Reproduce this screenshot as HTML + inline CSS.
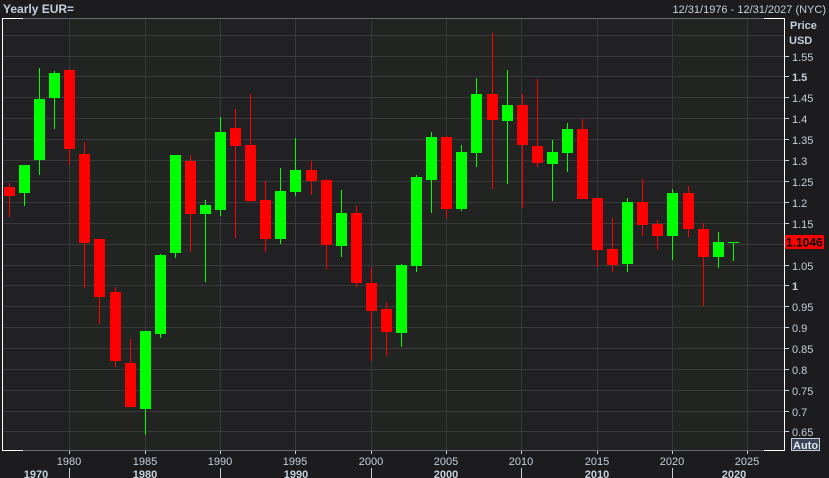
<!DOCTYPE html>
<html><head><meta charset="utf-8"><style>
html,body{margin:0;padding:0;background:#1c1c1e;width:829px;height:478px;overflow:hidden;font-family:"Liberation Sans",sans-serif}
svg{display:block}
text{font-family:"Liberation Sans",sans-serif;fill:#c6cfd8;font-size:11px}
</style></head><body>
<svg width="829" height="478" viewBox="0 0 829 478">
<rect x="0" y="0" width="829" height="478" fill="#1c1c1e"/>
<rect x="2" y="18" width="782" height="432" fill="#212123"/>
<rect x="69" y="18" width="151" height="432" fill="#222422"/>
<rect x="371" y="18" width="150" height="432" fill="#222422"/>
<rect x="672" y="18" width="75" height="432" fill="#222422"/>
<g stroke="#38393b" stroke-width="1">
<line x1="2" x2="784" y1="35.5" y2="35.5"/><line x1="2" x2="784" y1="56.5" y2="56.5"/><line x1="2" x2="784" y1="76.5" y2="76.5"/><line x1="2" x2="784" y1="97.5" y2="97.5"/><line x1="2" x2="784" y1="118.5" y2="118.5"/><line x1="2" x2="784" y1="139.5" y2="139.5"/><line x1="2" x2="784" y1="160.5" y2="160.5"/><line x1="2" x2="784" y1="181.5" y2="181.5"/><line x1="2" x2="784" y1="202.5" y2="202.5"/><line x1="2" x2="784" y1="223.5" y2="223.5"/><line x1="2" x2="784" y1="244.5" y2="244.5"/><line x1="2" x2="784" y1="265.5" y2="265.5"/><line x1="2" x2="784" y1="285.5" y2="285.5"/><line x1="2" x2="784" y1="306.5" y2="306.5"/><line x1="2" x2="784" y1="327.5" y2="327.5"/><line x1="2" x2="784" y1="348.5" y2="348.5"/><line x1="2" x2="784" y1="369.5" y2="369.5"/><line x1="2" x2="784" y1="390.5" y2="390.5"/><line x1="2" x2="784" y1="411.5" y2="411.5"/><line x1="2" x2="784" y1="431.5" y2="431.5"/>
<line x1="69.5" x2="69.5" y1="18" y2="450"/><line x1="145.5" x2="145.5" y1="18" y2="450"/><line x1="220.5" x2="220.5" y1="18" y2="450"/><line x1="295.5" x2="295.5" y1="18" y2="450"/><line x1="371.5" x2="371.5" y1="18" y2="450"/><line x1="446.5" x2="446.5" y1="18" y2="450"/><line x1="521.5" x2="521.5" y1="18" y2="450"/><line x1="597.5" x2="597.5" y1="18" y2="450"/><line x1="672.5" x2="672.5" y1="18" y2="450"/><line x1="747.5" x2="747.5" y1="18" y2="450"/>
</g>
<g stroke="#6a6b6d"><line x1="2" x2="784" y1="18.5" y2="18.5"/><line x1="2" x2="784" y1="450.5" y2="450.5"/></g>
<g stroke="#ffffff" stroke-width="1">
<line x1="2.5" x2="2.5" y1="18" y2="451"/><line x1="2" x2="23" y1="18.5" y2="18.5"/><line x1="2" x2="23" y1="450.5" y2="450.5"/>
<line x1="764" x2="784" y1="18.5" y2="18.5"/><line x1="764" x2="784" y1="450.5" y2="450.5"/><line x1="784.5" x2="784.5" y1="18" y2="451"/>
</g>
<g fill="#ff0000" stroke="#ff0000">
<line x1="9.5" x2="9.5" y1="183" y2="217"/><rect x="4" y="187" width="11" height="9" stroke="none"/>
<line x1="69.5" x2="69.5" y1="69" y2="165"/><rect x="64" y="70" width="11" height="79" stroke="none"/>
<line x1="84.5" x2="84.5" y1="142" y2="288"/><rect x="79" y="154" width="11" height="89" stroke="none"/>
<line x1="99.5" x2="99.5" y1="239" y2="324"/><rect x="94" y="239" width="11" height="58" stroke="none"/>
<line x1="115.5" x2="115.5" y1="287" y2="367"/><rect x="110" y="292" width="11" height="69" stroke="none"/>
<line x1="130.5" x2="130.5" y1="339" y2="407"/><rect x="125" y="363" width="11" height="44" stroke="none"/>
<line x1="190.5" x2="190.5" y1="155" y2="252"/><rect x="185" y="161" width="11" height="53" stroke="none"/>
<line x1="235.5" x2="235.5" y1="109" y2="238"/><rect x="230" y="128" width="11" height="18" stroke="none"/>
<line x1="250.5" x2="250.5" y1="94" y2="202"/><rect x="245" y="145" width="11" height="56" stroke="none"/>
<line x1="265.5" x2="265.5" y1="181" y2="252"/><rect x="260" y="200" width="11" height="39" stroke="none"/>
<line x1="311.5" x2="311.5" y1="161" y2="195"/><rect x="306" y="170" width="11" height="11" stroke="none"/>
<line x1="326.5" x2="326.5" y1="179" y2="269"/><rect x="321" y="180" width="11" height="65" stroke="none"/>
<line x1="356.5" x2="356.5" y1="206" y2="287"/><rect x="351" y="213" width="11" height="70" stroke="none"/>
<line x1="371.5" x2="371.5" y1="267" y2="361"/><rect x="366" y="283" width="11" height="28" stroke="none"/>
<line x1="386.5" x2="386.5" y1="302" y2="356"/><rect x="381" y="309" width="11" height="23" stroke="none"/>
<line x1="446.5" x2="446.5" y1="136" y2="218"/><rect x="441" y="137" width="11" height="72" stroke="none"/>
<line x1="492.5" x2="492.5" y1="33" y2="189"/><rect x="487" y="94" width="11" height="26" stroke="none"/>
<line x1="522.5" x2="522.5" y1="94" y2="208"/><rect x="517" y="105" width="11" height="40" stroke="none"/>
<line x1="537.5" x2="537.5" y1="79" y2="167"/><rect x="532" y="146" width="11" height="17" stroke="none"/>
<line x1="582.5" x2="582.5" y1="119" y2="199"/><rect x="577" y="129" width="11" height="70" stroke="none"/>
<line x1="597.5" x2="597.5" y1="198" y2="267"/><rect x="592" y="198" width="11" height="52" stroke="none"/>
<line x1="612.5" x2="612.5" y1="218" y2="272"/><rect x="607" y="249" width="11" height="16" stroke="none"/>
<line x1="642.5" x2="642.5" y1="179" y2="236"/><rect x="637" y="202" width="11" height="23" stroke="none"/>
<line x1="657.5" x2="657.5" y1="220" y2="250"/><rect x="652" y="224" width="11" height="12" stroke="none"/>
<line x1="688.5" x2="688.5" y1="186" y2="237"/><rect x="683" y="193" width="11" height="36" stroke="none"/>
<line x1="703.5" x2="703.5" y1="223" y2="306"/><rect x="698" y="229" width="11" height="28" stroke="none"/>
</g>
<g fill="#00ff00" stroke="#00ff00">
<line x1="24.5" x2="24.5" y1="165" y2="206"/><rect x="19" y="165" width="11" height="28" stroke="none"/>
<line x1="39.5" x2="39.5" y1="68" y2="175"/><rect x="34" y="99" width="11" height="61" stroke="none"/>
<line x1="54.5" x2="54.5" y1="71" y2="129"/><rect x="49" y="73" width="11" height="25" stroke="none"/>
<line x1="145.5" x2="145.5" y1="331" y2="435"/><rect x="140" y="331" width="11" height="78" stroke="none"/>
<line x1="160.5" x2="160.5" y1="254" y2="338"/><rect x="155" y="255" width="11" height="79" stroke="none"/>
<line x1="175.5" x2="175.5" y1="155" y2="258"/><rect x="170" y="155" width="11" height="98" stroke="none"/>
<line x1="205.5" x2="205.5" y1="200" y2="282"/><rect x="200" y="205" width="11" height="9" stroke="none"/>
<line x1="220.5" x2="220.5" y1="117" y2="216"/><rect x="215" y="132" width="11" height="78" stroke="none"/>
<line x1="280.5" x2="280.5" y1="168" y2="244"/><rect x="275" y="191" width="11" height="48" stroke="none"/>
<line x1="295.5" x2="295.5" y1="138" y2="196"/><rect x="290" y="170" width="11" height="22" stroke="none"/>
<line x1="341.5" x2="341.5" y1="190" y2="257"/><rect x="336" y="213" width="11" height="33" stroke="none"/>
<line x1="401.5" x2="401.5" y1="264" y2="347"/><rect x="396" y="265" width="11" height="68" stroke="none"/>
<line x1="416.5" x2="416.5" y1="175" y2="272"/><rect x="411" y="177" width="11" height="89" stroke="none"/>
<line x1="431.5" x2="431.5" y1="132" y2="213"/><rect x="426" y="137" width="11" height="43" stroke="none"/>
<line x1="461.5" x2="461.5" y1="145" y2="211"/><rect x="456" y="152" width="11" height="57" stroke="none"/>
<line x1="476.5" x2="476.5" y1="78" y2="167"/><rect x="471" y="94" width="11" height="59" stroke="none"/>
<line x1="507.5" x2="507.5" y1="70" y2="184"/><rect x="502" y="105" width="11" height="16" stroke="none"/>
<line x1="552.5" x2="552.5" y1="140" y2="201"/><rect x="547" y="152" width="11" height="12" stroke="none"/>
<line x1="567.5" x2="567.5" y1="123" y2="172"/><rect x="562" y="129" width="11" height="24" stroke="none"/>
<line x1="627.5" x2="627.5" y1="198" y2="272"/><rect x="622" y="202" width="11" height="62" stroke="none"/>
<line x1="672.5" x2="672.5" y1="189" y2="260"/><rect x="667" y="193" width="11" height="43" stroke="none"/>
<line x1="718.5" x2="718.5" y1="232" y2="268"/><rect x="713" y="242" width="11" height="15" stroke="none"/>
<line x1="733.5" x2="733.5" y1="242" y2="261"/><line x1="728" x2="739" y1="242.5" y2="242.5"/>
</g>
<text x="3" y="13" style="font-size:12px;font-weight:bold;fill:#c6cfdc">Yearly EUR=</text>
<text x="826" y="13" text-anchor="end" style="font-size:11px">12/31/1976 - 12/31/2027 (NYC)</text>
<text x="790" y="29" style="font-weight:bold">Price</text>
<text x="789" y="44" style="font-weight:bold">USD</text>
<g stroke="#c6cfd8"><line x1="785" x2="789" y1="56.5" y2="56.5"/><line x1="785" x2="789" y1="76.5" y2="76.5"/><line x1="785" x2="789" y1="97.5" y2="97.5"/><line x1="785" x2="789" y1="118.5" y2="118.5"/><line x1="785" x2="789" y1="139.5" y2="139.5"/><line x1="785" x2="789" y1="160.5" y2="160.5"/><line x1="785" x2="789" y1="181.5" y2="181.5"/><line x1="785" x2="789" y1="202.5" y2="202.5"/><line x1="785" x2="789" y1="223.5" y2="223.5"/><line x1="785" x2="789" y1="265.5" y2="265.5"/><line x1="785" x2="789" y1="285.5" y2="285.5"/><line x1="785" x2="789" y1="306.5" y2="306.5"/><line x1="785" x2="789" y1="327.5" y2="327.5"/><line x1="785" x2="789" y1="348.5" y2="348.5"/><line x1="785" x2="789" y1="369.5" y2="369.5"/><line x1="785" x2="789" y1="390.5" y2="390.5"/><line x1="785" x2="789" y1="411.5" y2="411.5"/><line x1="785" x2="789" y1="431.5" y2="431.5"/></g>
<text x="792" y="61">1.55</text>
<text x="792" y="81" style="font-weight:bold">1.5</text>
<text x="792" y="102">1.45</text>
<text x="792" y="123">1.4</text>
<text x="792" y="144">1.35</text>
<text x="792" y="165">1.3</text>
<text x="792" y="186">1.25</text>
<text x="792" y="207">1.2</text>
<text x="792" y="228">1.15</text>
<rect x="785" y="235" width="39" height="14" fill="#ff0000"/>
<text x="786" y="246.5" style="font-weight:bold;font-size:12px;fill:#000">1.1046</text>
<text x="792" y="270">1.05</text>
<text x="792" y="290" style="font-weight:bold">1</text>
<text x="792" y="311">0.95</text>
<text x="792" y="332">0.9</text>
<text x="792" y="353">0.85</text>
<text x="792" y="374">0.8</text>
<text x="792" y="395">0.75</text>
<text x="792" y="416">0.7</text>
<text x="792" y="436">0.65</text>
<rect x="791.5" y="438.5" width="28" height="12" fill="#3a4456" stroke="#c6cfd8"/>
<text x="793" y="449" style="font-weight:bold;fill:#dfe6ee">Auto</text>
<g stroke="#c6cfd8"><line x1="69.5" x2="69.5" y1="451" y2="454"/><line x1="145.5" x2="145.5" y1="451" y2="454"/><line x1="220.5" x2="220.5" y1="451" y2="454"/><line x1="295.5" x2="295.5" y1="451" y2="454"/><line x1="371.5" x2="371.5" y1="451" y2="454"/><line x1="446.5" x2="446.5" y1="451" y2="454"/><line x1="521.5" x2="521.5" y1="451" y2="454"/><line x1="597.5" x2="597.5" y1="451" y2="454"/><line x1="672.5" x2="672.5" y1="451" y2="454"/><line x1="747.5" x2="747.5" y1="451" y2="454"/>
<line x1="69.5" x2="69.5" y1="468" y2="478"/><line x1="220.5" x2="220.5" y1="468" y2="478"/><line x1="371.5" x2="371.5" y1="468" y2="478"/><line x1="521.5" x2="521.5" y1="468" y2="478"/><line x1="672.5" x2="672.5" y1="468" y2="478"/></g>
<g text-anchor="middle">
<text x="69" y="465">1980</text><text x="145" y="465">1985</text><text x="220" y="465">1990</text><text x="295" y="465">1995</text><text x="371" y="465">2000</text><text x="446" y="465">2005</text><text x="521" y="465">2010</text><text x="597" y="465">2015</text><text x="672" y="465">2020</text><text x="747" y="465">2025</text>
<g style="font-weight:bold;font-size:12px;fill:#dde3ea"><text x="36" y="478">1970</text><text x="145" y="478">1980</text><text x="296" y="478">1990</text><text x="446" y="478">2000</text><text x="597" y="478">2010</text><text x="734" y="478">2020</text></g>
</g>
</svg>
</body></html>
